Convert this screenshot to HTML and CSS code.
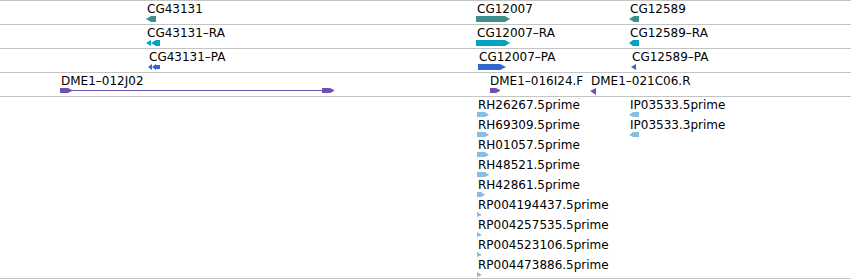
FILE: index.html
```html
<!DOCTYPE html>
<html lang="en">
<head>
    <meta charset="UTF-8">
    <title>Tracks</title>
    <link rel="stylesheet" href="styles.css">
</head>
<body>
	<div id="browser">
		<!-- genes -->
		<div class="track track-gene">
			<div class="feature" style="left:146px">
				<div class="label">CG43131</div>
				<svg class="glyph" width="10" height="6"><polygon points="0,3 5,0 10,0 10,6 5,6"/></svg>
			</div>
			<div class="feature" style="left:476px">
				<div class="label">CG12007</div>
				<svg class="glyph" width="34" height="6"><polygon points="0,0 29,0 34,3 29,6 0,6"/></svg>
			</div>
			<div class="feature" style="left:629px">
				<div class="label">CG12589</div>
				<svg class="glyph" width="10" height="6"><polygon points="0,3 5,0 10,0 10,6 5,6"/></svg>
			</div>
		</div>

		<!-- transcripts -->
		<div class="track track-mrna">
			<div class="feature" style="left:146px">
				<div class="label">CG43131–RA</div>
				<svg class="glyph" width="14" height="6"><polygon points="0,3 5,0 5,6"/><polygon points="5,3 10,0 10,6"/><rect x="10" y="0" width="4" height="6"/></svg>
			</div>
			<div class="feature" style="left:476px">
				<div class="label">CG12007–RA</div>
				<svg class="glyph" width="34" height="6"><polygon points="0,0 29,0 34,3 29,6 0,6"/></svg>
			</div>
			<div class="feature" style="left:629px">
				<div class="label">CG12589–RA</div>
				<svg class="glyph" width="10" height="6"><polygon points="0,3 4,0 10,0 10,6 4,6"/></svg>
			</div>
		</div>

		<!-- proteins -->
		<div class="track track-protein">
			<div class="feature" style="left:148px">
				<div class="label">CG43131–PA</div>
				<svg class="glyph" width="12" height="6"><polygon points="0,3 4,0 4,6"/><polygon points="4,3 8,0 8,6"/><rect x="8" y="1" width="4" height="4"/></svg>
			</div>
			<div class="feature" style="left:478px">
				<div class="label">CG12007–PA</div>
				<svg class="glyph" width="28" height="6"><polygon points="0,0 22,0 28,3 22,6 0,6"/></svg>
			</div>
			<div class="feature" style="left:631px">
				<div class="label">CG12589–PA</div>
				<svg class="glyph" width="5" height="6"><polygon points="0,3 5,0 5,6"/></svg>
			</div>
		</div>

		<!-- clones -->
		<div class="track track-clone">
			<div class="feature" style="left:60px">
				<div class="label">DME1–012J02</div>
				<svg class="glyph" width="274" height="6"><polygon points="0,0 8,0 12,2 12,3 8,5 0,5"/><rect x="10" y="2" width="254" height="1"/><polygon points="262,0 270,0 274,2 274,3 270,5 262,5"/></svg>
			</div>
			<div class="feature" style="left:489px">
				<div class="label">DME1–016I24.F</div>
				<svg class="glyph glyph-in" width="11" height="6"><polygon points="1,0 7,0 11,2 11,3 7,5 1,5"/></svg>
			</div>
			<div class="feature" style="left:590px">
				<div class="label">DME1–021C06.R</div>
				<svg class="glyph" width="6" height="7"><polygon points="0,3 6,0 6,7"/></svg>
			</div>
		</div>

		<!-- ESTs -->
		<div class="track track-est">
			<div class="feature" style="left:477px;top:1px">
				<div class="label">RH26267.5prime</div>
				<svg class="glyph" width="12" height="6"><polygon points="0,0 8,0 12,3 8,5 0,5"/></svg>
			</div>
			<div class="feature" style="left:477px;top:21px">
				<div class="label">RH69309.5prime</div>
				<svg class="glyph" width="12" height="6"><polygon points="0,0 8,0 12,3 8,5 0,5"/></svg>
			</div>
			<div class="feature" style="left:477px;top:41px">
				<div class="label">RH01057.5prime</div>
				<svg class="glyph" width="12" height="6"><polygon points="0,0 8,0 12,3 8,5 0,5"/></svg>
			</div>
			<div class="feature" style="left:477px;top:61px">
				<div class="label">RH48521.5prime</div>
				<svg class="glyph" width="12" height="6"><polygon points="0,0 8,0 12,3 8,5 0,5"/></svg>
			</div>
			<div class="feature" style="left:477px;top:81px">
				<div class="label">RH42861.5prime</div>
				<svg class="glyph" width="8" height="6"><polygon points="0,0 4,0 8,3 4,5 0,5"/></svg>
			</div>
			<div class="feature" style="left:477px;top:101px">
				<div class="label">RP004194437.5prime</div>
				<svg class="glyph" width="5" height="6"><polygon points="0,0 5,3 0,5"/></svg>
			</div>
			<div class="feature" style="left:477px;top:121px">
				<div class="label">RP004257535.5prime</div>
				<svg class="glyph" width="5" height="6"><polygon points="0,0 5,3 0,5"/></svg>
			</div>
			<div class="feature" style="left:477px;top:141px">
				<div class="label">RP004523106.5prime</div>
				<svg class="glyph" width="5" height="6"><polygon points="0,0 5,3 0,5"/></svg>
			</div>
			<div class="feature" style="left:477px;top:161px">
				<div class="label">RP004473886.5prime</div>
				<svg class="glyph" width="5" height="6"><polygon points="0,0 5,3 0,5"/></svg>
			</div>
			<div class="feature" style="left:629px;top:1px">
				<div class="label">IP03533.5prime</div>
				<svg class="glyph" width="10" height="6"><polygon points="0,3 4,0 10,0 10,5 4,5"/></svg>
			</div>
			<div class="feature" style="left:629px;top:21px">
				<div class="label">IP03533.3prime</div>
				<svg class="glyph" width="10" height="6"><polygon points="0,3 4,0 10,0 10,5 4,5"/></svg>
			</div>
		</div>
	</div>
</body>
</html>
```

FILE: styles.css
```css
body, html {
    margin: 0;
    padding: 0;
    background: #fff;
}

#browser {
    width: 851px;
    font-family: "DejaVu Sans", sans-serif;
    font-size: 12px;
    color: #000;
}

.track {
    position: relative;
    height: 23px;
    border-top: 1px solid #c4c4c4;
}

.track-est {
    height: 181px;
    border-bottom: 1px solid #c4c4c4;
}

.feature {
    position: absolute;
    top: 1px;
}

.label {
    line-height: 14px;
    white-space: nowrap;
    padding-left: 1px;
}

.glyph {
    display: block;
}

.track-gene .glyph { fill: #3e8e8e; }
.track-mrna .glyph { fill: #00a2c2; }
.track-protein .glyph { fill: #2f66d0; }
.track-clone .glyph { fill: #6f52b0; }
.track-est .glyph { fill: #86bde0; }
```
